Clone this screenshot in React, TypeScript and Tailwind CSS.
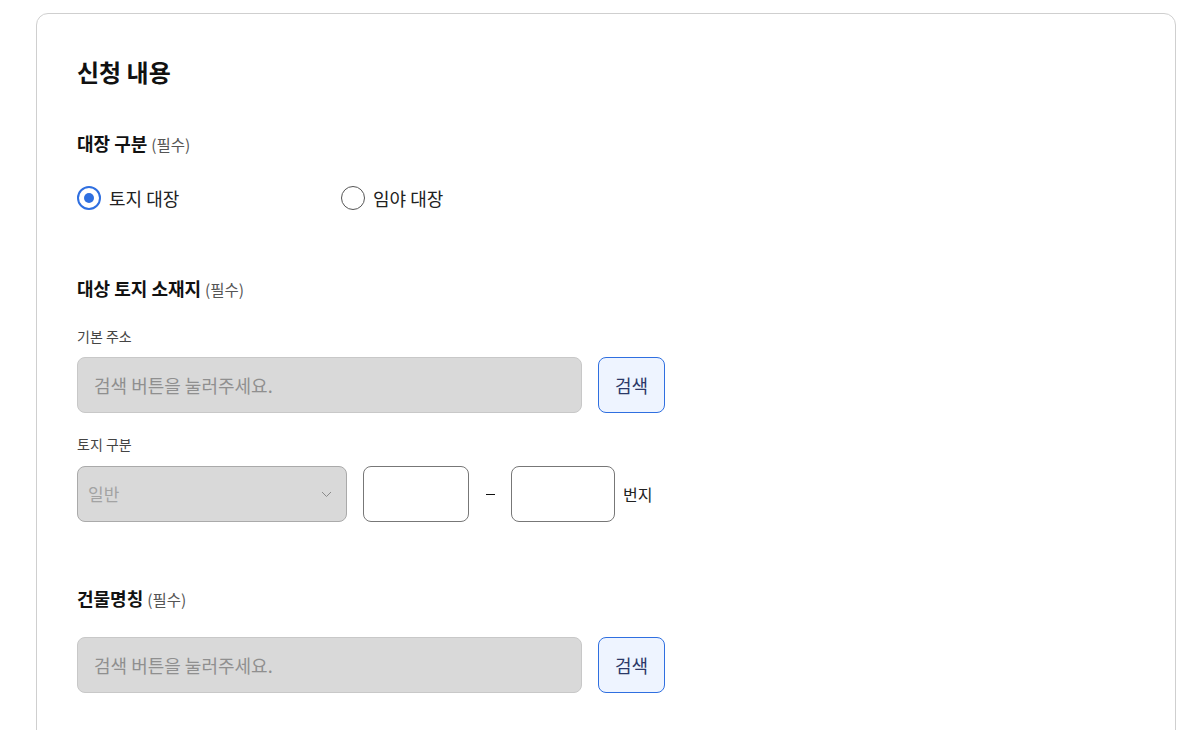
import React from "react";

const font = { fontFamily: '"Noto Sans CJK KR", "Noto Sans", sans-serif' };

function SectionLabel({ children }: { children: React.ReactNode }) {
  return (
    <div className="flex items-baseline h-6 leading-6">
      <span className="text-[18px] font-bold text-[#111]">{children}</span>
      <span className="ml-1 text-[15.5px] text-[#555]">(필수)</span>
    </div>
  );
}

function SearchRow() {
  return (
    <div className="flex items-center">
      <div className="w-[505px] h-[56px] rounded-lg border border-[#c8c8c8] bg-[#d9d9d9] flex items-center px-4 text-[18px] text-[#8f8f8f]">
        검색 버튼을 눌러주세요.
      </div>
      <button className="ml-4 w-[67px] h-[56px] rounded-lg border border-[#2f6fe0] bg-[#eef4ff] text-[18px] text-[#2b3868]">
        검색
      </button>
    </div>
  );
}

export default function App() {
  return (
    <div className="w-[1201px] h-[730px] overflow-hidden bg-white" style={font}>
      <div className="ml-[36px] mt-[13px] w-[1140px] h-[760px] rounded-xl border border-[#cfcfcf] px-10 pt-10">
        <h1 className="text-[24px] leading-9 font-bold text-[#111]">신청 내용</h1>

        <div className="mt-[41px]">
          <SectionLabel>대장 구분</SectionLabel>
        </div>

        <div className="mt-[31px] flex items-center h-6">
          <label className="flex items-center w-[264px]">
            <span className="w-6 h-6 rounded-full border-2 border-[#2f6fe0] flex items-center justify-center">
              <span className="w-[10px] h-[10px] rounded-full bg-[#2f6fe0]" />
            </span>
            <span className="ml-2 text-[18px] text-[#222]">토지 대장</span>
          </label>
          <label className="flex items-center">
            <span className="w-6 h-6 rounded-full border border-[#555]" />
            <span className="ml-2 text-[18px] text-[#222]">임야 대장</span>
          </label>
        </div>

        <div className="mt-[66px]">
          <SectionLabel>대상 토지 소재지</SectionLabel>
        </div>

        <div className="mt-[26px] text-[14px] leading-5 text-[#444]">기본 주소</div>
        <div className="mt-[11px]">
          <SearchRow />
        </div>

        <div className="mt-[21px] text-[14px] leading-5 text-[#444]">토지 구분</div>
        <div className="mt-3 flex items-center">
          <div className="w-[270px] h-[56px] rounded-lg border border-[#aaaaaa] bg-[#d9d9d9] flex items-center justify-between pl-[10px] pr-[14px]">
            <span className="text-[17px] text-[#a3a3a3]">일반</span>
            <svg width="11" height="7" viewBox="0 0 11 7" fill="none">
              <path d="M1 1l4.5 4.5L10 1" stroke="#8a8a8a" strokeWidth="1" />
            </svg>
          </div>
          <div className="ml-4 w-[106px] h-[56px] rounded-lg border border-[#777] bg-white" />
          <div className="w-[42px] flex justify-center">
            <span className="block w-[9px] h-px bg-[#111]" />
          </div>
          <div className="w-[104px] h-[56px] rounded-lg border border-[#777] bg-white" />
          <span className="ml-2 text-[16px] text-[#222]">번지</span>
        </div>

        <div className="mt-[64px]">
          <SectionLabel>건물명칭</SectionLabel>
        </div>
        <div className="mt-[27px]">
          <SearchRow />
        </div>
      </div>
    </div>
  );
}
